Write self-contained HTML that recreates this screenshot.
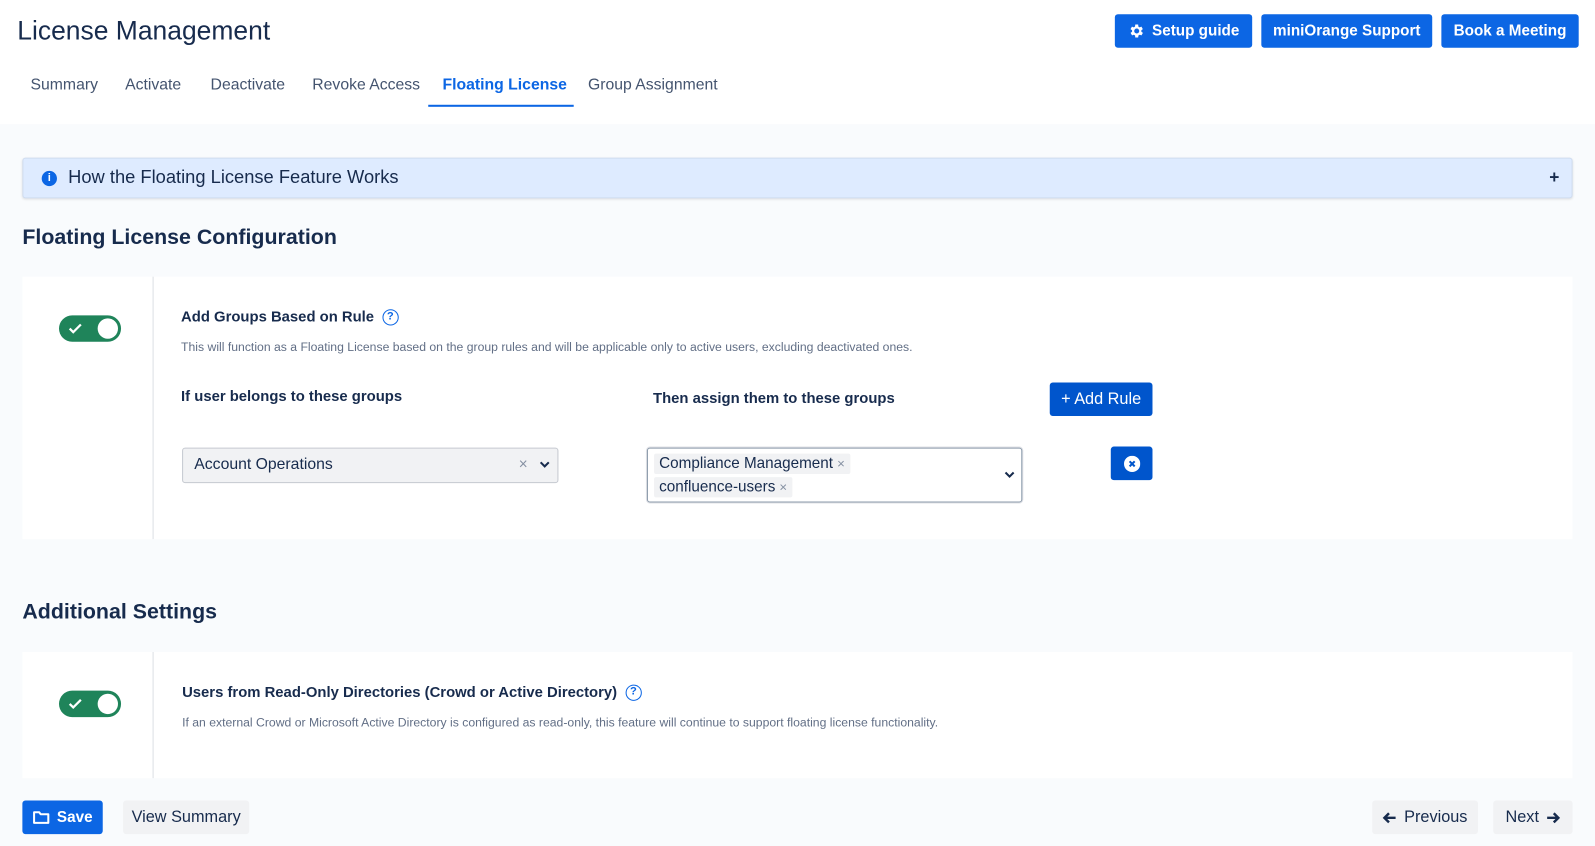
<!DOCTYPE html>
<html><head><meta charset="utf-8"><style>
*{box-sizing:border-box;margin:0;padding:0}
html,body{width:1595px;height:846px;overflow:hidden;background:#f9fbfd}
#w{position:absolute;left:0;top:0;width:1568px;height:832px;transform:scale(1.0172);transform-origin:0 0;font-family:"Liberation Sans",sans-serif;color:#172b4d}
.a{position:absolute}
.top{left:0;top:0;width:1568px;height:122px;background:#fff}
.btn{position:absolute;background:#0c66e4;color:#fff;border-radius:3px;font-weight:bold;font-size:15px;display:flex;align-items:center;justify-content:center;gap:7px}
.tab{position:absolute;top:75px;font-size:15.5px;color:#44546f}
.card{position:absolute;left:22px;width:1524px;background:#fff}
.div{position:absolute;left:128px;top:0;bottom:0;width:1px;background:#dcdfe4}
.tog{position:absolute;left:36px;width:61px;height:26px;border-radius:13px;background:#1f845a}
.tog:after{content:"";position:absolute;right:3px;top:3px;width:20px;height:20px;border-radius:50%;background:#fff}
.tog svg{position:absolute;left:9px;top:7px}
.h{font-size:21px;font-weight:bold;color:#172b4d}
.q{display:inline-block;width:16px;height:16px;border:1.5px solid #0c66e4;border-radius:50%;color:#0c66e4;font-size:11px;text-align:center;line-height:13px;font-weight:bold;vertical-align:middle;margin-left:8px}
.sm{font-size:12px;color:#626f86}
.lb{font-size:14.6px;font-weight:bold}
.gb{position:absolute;background:#f1f2f4;border-radius:3px;color:#172b4d;font-size:16px;display:flex;align-items:center;justify-content:center;gap:7px}
.chip{display:inline-block;background:#f1f2f4;border-radius:2px;padding:0 5px;font-size:15px;line-height:20px;color:#172b4d}
.chip span{color:#8590a2;font-size:13px;margin-left:4px}
</style></head><body><div id="w">
<div class="a top"></div>
<div class="a" style="left:17px;top:15px;font-size:26px;color:#172b4d">License Management</div>
<div class="btn" style="left:1096px;top:14px;width:135px;height:33px"><svg width="17" height="17" viewBox="0 0 24 24"><path fill="#fff" d="M19.4 13a7.5 7.5 0 000-2l2.1-1.6-2-3.5-2.5 1a7.6 7.6 0 00-1.7-1L15 3h-4l-.4 2.9a7.6 7.6 0 00-1.7 1l-2.5-1-2 3.5L6.6 11a7.5 7.5 0 000 2l-2.1 1.6 2 3.5 2.5-1c.5.4 1.1.7 1.7 1L11 21h4l.4-2.9c.6-.3 1.2-.6 1.700-1l2.5 1 2-3.5zM13 15.5a3.5 3.5 0 110-7 3.5 3.5 0 010 7z" transform="translate(-1 0)"/></svg>Setup guide</div>
<div class="btn" style="left:1240px;top:14px;width:168px;height:33px">miniOrange Support</div>
<div class="btn" style="left:1417px;top:14px;width:135px;height:33px">Book a Meeting</div>
<div class="tab" style="left:30px">Summary</div>
<div class="tab" style="left:123px">Activate</div>
<div class="tab" style="left:207px">Deactivate</div>
<div class="tab" style="left:307px">Revoke Access</div>
<div class="tab" style="left:435px;color:#0c66e4;font-weight:bold">Floating License</div>
<div class="a" style="left:421px;top:103px;width:143px;height:2px;background:#0c66e4"></div>
<div class="tab" style="left:578px">Group Assignment</div>

<div class="a" style="left:22px;top:155px;width:1524px;height:40px;background:#deebff;border:1px solid #cfdcef;border-radius:3px;box-shadow:0 1px 2px rgba(0,0,0,.1)">
<div class="a" style="left:18px;top:12px;width:15px;height:15px;border-radius:50%;background:#0c66e4;color:#fff;font-size:11px;font-weight:bold;text-align:center;line-height:15px">i</div>
<div class="a" style="left:44px;top:8px;font-size:18px">How the Floating License Feature Works</div>
<div class="a" style="right:12px;top:9px;font-size:17px;font-weight:bold">+</div></div>

<div class="a h" style="left:22px;top:222px">Floating License Configuration</div>
<div class="card" style="top:272px;height:258px">
<div class="div"></div>
<div class="tog" style="top:38px"><svg width="14" height="12" viewBox="0 0 14 12"><path d="M1.5 6l3.5 3.5L12.5 2" stroke="#fff" stroke-width="2.2" fill="none"/></svg></div>
<div class="a lb" style="left:156px;top:32px">Add Groups Based on Rule<span class="q">?</span></div>
<div class="a sm" style="left:156px;top:62px">This will function as a Floating License based on the group rules and will be applicable only to active users, excluding deactivated ones.</div>
<div class="a lb" style="left:156px;top:110px">If user belongs to these groups</div>
<div class="a lb" style="left:620px;top:112px">Then assign them to these groups</div>
<div class="btn" style="left:1010px;top:104px;width:101px;height:33px;font-weight:normal;font-size:16px;background:#0055cc">+ Add Rule</div>
<div class="a" style="left:157px;top:168px;width:370px;height:35px;background:#f1f2f4;border:1px solid #c5c9d0;border-radius:3px">
<div class="a" style="left:11px;top:7px;font-size:15.5px">Account Operations</div>
<div class="a" style="left:330px;top:7px;color:#8590a2;font-size:15px">×</div>
<svg class="a" style="left:350px;top:12px" width="11" height="8" viewBox="0 0 11 8"><path d="M1.5 1.5l4 4 4-4" stroke="#172b4d" stroke-width="2" fill="none"/></svg></div>
<div class="a" style="left:614px;top:168px;width:369px;height:54px;background:#fff;border:1px solid #8c9bab;border-radius:3px;box-shadow:0 0 0 1px #dfe1e6">
<div class="a" style="left:6px;top:5px"><div class="chip">Compliance Management<span>×</span></div></div>
<div class="a" style="left:6px;top:28px"><div class="chip">confluence-users<span>×</span></div></div>
<svg class="a" style="left:350px;top:22px" width="11" height="8" viewBox="0 0 11 8"><path d="M1.5 1.5l4 4 4-4" stroke="#172b4d" stroke-width="2" fill="none"/></svg></div>
<div class="btn" style="left:1070px;top:167px;width:41px;height:33px;background:#0055cc"><svg width="16" height="16" viewBox="0 0 16 16"><circle cx="8" cy="8" r="8" fill="#fff"/><path d="M5.5 5.5l5 5M10.5 5.5l-5 5" stroke="#0055cc" stroke-width="2"/></svg></div>
</div>

<div class="a h" style="left:22px;top:590px">Additional Settings</div>
<div class="card" style="top:641px;height:124px">
<div class="div"></div>
<div class="tog" style="top:38px"><svg width="14" height="12" viewBox="0 0 14 12"><path d="M1.5 6l3.5 3.5L12.5 2" stroke="#fff" stroke-width="2.2" fill="none"/></svg></div>
<div class="a lb" style="left:157px;top:32px">Users from Read-Only Directories (Crowd or Active Directory)<span class="q">?</span></div>
<div class="a sm" style="left:157px;top:62px">If an external Crowd or Microsoft Active Directory is configured as read-only, this feature will continue to support floating license functionality.</div>
</div>

<div class="btn" style="left:22px;top:787px;width:79px;height:33px"><svg width="17" height="15" viewBox="0 0 17 15"><path d="M1.5 2.5h5l1.5 2h7.5v8.5h-14z" stroke="#fff" stroke-width="2" fill="none" stroke-linejoin="round"/></svg>Save</div>
<div class="gb" style="left:121px;top:787px;width:124px;height:33px">View Summary</div>
<div class="gb" style="left:1349px;top:787px;width:104px;height:33px"><svg width="14" height="12" viewBox="0 0 14 12"><path d="M13 6H2M6.5 1.5L2 6l4.5 4.5" stroke="#172b4d" stroke-width="2.4" fill="none"/></svg>Previous</div>
<div class="gb" style="left:1468px;top:787px;width:78px;height:33px">Next<svg width="14" height="12" viewBox="0 0 14 12"><path d="M1 6h11M7.5 1.5L12 6l-4.5 4.5" stroke="#172b4d" stroke-width="2.4" fill="none"/></svg></div>
</div></body></html>
